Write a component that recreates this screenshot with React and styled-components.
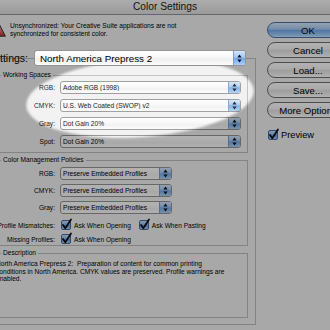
import React from 'react';
import styled, { createGlobalStyle, css } from 'styled-components';

const Global = createGlobalStyle`
  html, body { margin: 0; padding: 0; background: #a8a8a8; }
  body {
    width: 330px; height: 330px; overflow: hidden;
    font-family: "Liberation Sans", Arial, sans-serif; color: #000;
  }
`;

const Screen = styled.div`
  position: relative;
  width: 330px;
  height: 330px;
  overflow: hidden;
  background: #f0f0f0;
`;

const TitleBar = styled.div`
  height: 14px;
  border-bottom: 1px solid #949494;
  background: linear-gradient(#f6f6f6, #dedede);
  display: flex;
  align-items: center;
  justify-content: center;
  font-size: 10.2px;
  line-height: 14px;
  color: #1a1a1a;
`;

const Body = styled.div`
  display: flex;
  margin-left: -30px;
`;

const Main = styled.div`
  width: 286px;
  flex: none;
  display: flex;
  flex-direction: column;
`;

const Warning = styled.div`
  display: flex;
  align-items: flex-start;
  gap: 4px;
  padding-left: 19px;
  margin-top: 6px;
`;

const SmallText = styled.div`
  font-size: 6.6px;
  line-height: 7.5px;
  white-space: nowrap;
`;

const WarnText = styled(SmallText)`
  margin-top: 1px;
`;

const DescText = styled(SmallText)`
  padding-left: 1px;
`;

const SettingsRow = styled.div`
  display: grid;
  grid-template-columns: 58px 212px;
  column-gap: 6px;
  align-items: center;
  margin-top: 13px;
  margin-bottom: -8px;
  position: relative;
  z-index: 1;
`;

const BigLabel = styled.span`
  font-size: 10.5px;
  text-align: right;
  white-space: nowrap;
`;

const Advanced = styled.div`
  margin-left: 16px;
  border: 1px solid #bcbcbc;
  padding: 12px 7px 6px 7px;
  display: flex;
  flex-direction: column;
  gap: 3px;
`;

const Group = styled.fieldset`
  margin: 0;
  min-width: 0;
  border: 1px solid #bcbcbc;
  padding: ${p => p.$pt}px 0 ${p => p.$pb}px 0;
  box-sizing: border-box;
  ${p => p.$h && css`height: ${p.$h}px;`}
`;

const Legend = styled.legend`
  font-size: 6.6px;
  line-height: 8px;
  padding: 0 2px;
  margin-left: 6px;
`;

const Stack = styled.div`
  display: flex;
  flex-direction: column;
  gap: ${p => p.$gap}px;
`;

const Row = styled.div`
  display: grid;
  grid-template-columns: 60px auto;
  column-gap: 5px;
  align-items: center;
  ${p => p.$mt && css`margin-top: ${p.$mt}px;`}
`;

const RowLabel = styled.span`
  font-size: 6.6px;
  text-align: right;
  white-space: nowrap;
`;

const PopupBox = styled.div`
  box-sizing: border-box;
  height: ${p => p.$h}px;
  width: ${p => p.$w}px;
  border: 1px solid #939393;
  border-radius: 3px;
  background: linear-gradient(#ffffff, #f6f6f6 50%, #eeeeee 51%, #fcfcfc);
  display: flex;
  align-items: center;
  overflow: hidden;
  font-size: ${p => p.$fs}px;
  padding-left: ${p => p.$pl}px;
`;

const PopupText = styled.span`
  flex: 1;
  white-space: nowrap;
  overflow: hidden;
`;

const Stepper = styled.span`
  flex: none;
  width: 11px;
  align-self: stretch;
  border-left: 1px solid #7c9ccb;
  background: linear-gradient(#d3e6fb, #a2c6f2 45%, #74a7e8 52%, #a9d1f9);
  display: flex;
  align-items: center;
  justify-content: center;
`;

const Arrows = () => (
  <svg width="5" height="9" viewBox="0 0 5 9">
    <polygon points="0.4,3.6 2.5,0.6 4.6,3.6" fill="#111" />
    <polygon points="0.4,5.4 2.5,8.4 4.6,5.4" fill="#111" />
  </svg>
);

const Popup = ({ w, h = 13, fs = 6.6, pl = 2, children }) => (
  <PopupBox $w={w} $h={h} $fs={fs} $pl={pl}>
    <PopupText>{children}</PopupText>
    <Stepper><Arrows /></Stepper>
  </PopupBox>
);

const Checks = styled.div`
  display: flex;
  align-items: center;
  margin-left: 1px;
  gap: 8px;
`;

const CheckItem = styled.label`
  display: flex;
  align-items: center;
  gap: 3px;
  font-size: ${p => p.$fs || 6.6}px;
  white-space: nowrap;
`;

const CheckMark = () => (
  <svg width="10" height="10" viewBox="0 0 10 10" style={{ overflow: 'visible' }}>
    <defs>
      <linearGradient id="cbg" x1="0" y1="0" x2="0" y2="1">
        <stop offset="0" stopColor="#cfe4fb" />
        <stop offset="0.5" stopColor="#86b4ec" />
        <stop offset="0.52" stopColor="#5f98e2" />
        <stop offset="1" stopColor="#a6d0fa" />
      </linearGradient>
    </defs>
    <rect x="0.5" y="0.5" width="9" height="9" rx="1.5" fill="url(#cbg)" stroke="#46689c" />
    <path d="M2 5 L4.3 8.2 L10 -0.5" fill="none" stroke="#0a0a0a" strokeWidth="1.7" strokeLinecap="round" strokeLinejoin="round" />
  </svg>
);

const Side = styled.div`
  display: flex;
  flex-direction: column;
  gap: 4px;
  padding-top: 7px;
  margin-left: 11px;
`;

const Button = styled.button`
  box-sizing: border-box;
  width: 82px;
  height: 16px;
  margin: 0;
  padding: 0;
  border-radius: 8px;
  border: 1px solid #6f6f6f;
  background: linear-gradient(#ffffff, #f2f2f2 45%, #e1e1e1 52%, #f6f6f6 90%, #ffffff);
  font-family: "Liberation Sans", Arial, sans-serif;
  font-size: 9.6px;
  color: #000;
  display: flex;
  align-items: center;
  justify-content: center;
  white-space: nowrap;
  ${p => p.$default && css`
    border-color: #4d6d9e;
    background: linear-gradient(#d6e8fc, #a3c8f3 45%, #72a8ea 52%, #a5d3fd 90%, #cdeaff);
  `}
`;

const PreviewRow = styled.div`
  margin-top: 8px;
  margin-left: 1px;
`;

const WarnIcon = () => (
  <svg width="17" height="16" viewBox="0 0 17 16">
    <defs>
      <linearGradient id="wg" x1="0" y1="0" x2="0" y2="1">
        <stop offset="0" stopColor="#f6e2e2" />
        <stop offset="0.45" stopColor="#e68a8a" />
        <stop offset="1" stopColor="#c42a2a" />
      </linearGradient>
    </defs>
    <polygon points="9,0.8 16.4,15.2 1.6,15.2" fill="url(#wg)" stroke="#333" strokeWidth="1" strokeLinejoin="round" />
  </svg>
);

const Spotlight = styled.div`
  position: absolute;
  left: 26px;
  top: 59px;
  width: 228px;
  height: 78px;
  border-radius: 50%;
  transform: rotate(-4deg);
  background: rgba(255, 255, 255, 0.12);
  box-shadow: 0 0 0 600px rgba(0, 0, 0, 0.3);
  filter: blur(0.8px);
  pointer-events: none;
`;

export default function App() {
  return (
    <>
      <Global />
      <Screen>
        <TitleBar>Color Settings</TitleBar>
        <Body>
          <Main>
            <Warning>
              <WarnIcon />
              <WarnText>
                Unsynchronized: Your Creative Suite applications are not<br />
                synchronized for consistent color.
              </WarnText>
            </Warning>
            <SettingsRow>
              <BigLabel>Settings:</BigLabel>
              <Popup w={212} h={16} fs={9.8} pl={5}>North America Prepress 2</Popup>
            </SettingsRow>
            <Advanced>
              <Group $pt={2} $pb={4}>
                <Legend>Working Spaces</Legend>
                <Stack $gap={5}>
                  <Row><RowLabel>RGB:</RowLabel><Popup w={181}>Adobe RGB (1998)</Popup></Row>
                  <Row><RowLabel>CMYK:</RowLabel><Popup w={181}>U.S. Web Coated (SWOP) v2</Popup></Row>
                  <Row><RowLabel>Gray:</RowLabel><Popup w={181}>Dot Gain 20%</Popup></Row>
                  <Row><RowLabel>Spot:</RowLabel><Popup w={181}>Dot Gain 20%</Popup></Row>
                </Stack>
              </Group>
              <Group $pt={3} $pb={1}>
                <Legend>Color Management Policies</Legend>
                <Stack $gap={4}>
                  <Row><RowLabel>RGB:</RowLabel><Popup w={112}>Preserve Embedded Profiles</Popup></Row>
                  <Row><RowLabel>CMYK:</RowLabel><Popup w={112}>Preserve Embedded Profiles</Popup></Row>
                  <Row><RowLabel>Gray:</RowLabel><Popup w={112}>Preserve Embedded Profiles</Popup></Row>
                  <Row $mt={2}>
                    <RowLabel>Profile Mismatches:</RowLabel>
                    <Checks>
                      <CheckItem><CheckMark />Ask When Opening</CheckItem>
                      <CheckItem><CheckMark />Ask When Pasting</CheckItem>
                    </Checks>
                  </Row>
                  <Row>
                    <RowLabel>Missing Profiles:</RowLabel>
                    <Checks>
                      <CheckItem><CheckMark />Ask When Opening</CheckItem>
                    </Checks>
                  </Row>
                </Stack>
              </Group>
              <Group $pt={3} $pb={0} $h={69}>
                <Legend>Description</Legend>
                <DescText>
                  North America Prepress 2:&nbsp; Preparation of content for common printing<br />
                  conditions in North America. CMYK values are preserved. Profile warnings are<br />
                  enabled.
                </DescText>
              </Group>
            </Advanced>
          </Main>
          <Side>
            <Button $default>OK</Button>
            <Button>Cancel</Button>
            <Button>Load...</Button>
            <Button>Save...</Button>
            <Button>More Options</Button>
            <PreviewRow>
              <CheckItem $fs={9.3}><CheckMark />Preview</CheckItem>
            </PreviewRow>
          </Side>
        </Body>
        <Spotlight />
      </Screen>
    </>
  );
}
